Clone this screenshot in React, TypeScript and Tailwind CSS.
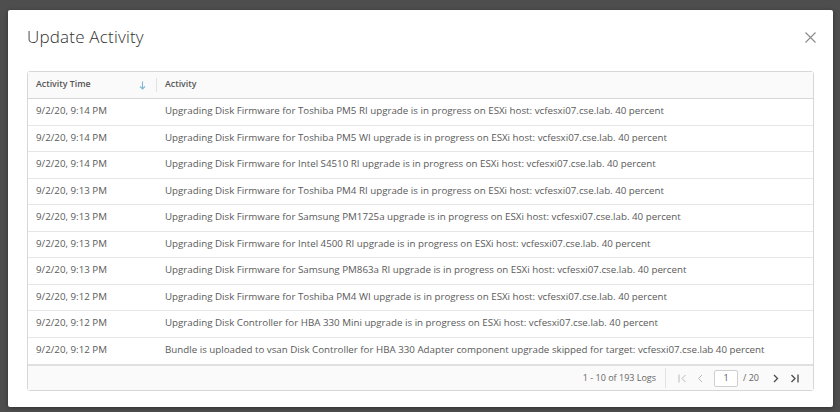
import React from 'react';

const rows: [string, string][] = [
  ['9/2/20, 9:14 PM', 'Upgrading Disk Firmware for Toshiba PM5 RI upgrade is in progress on ESXi host: vcfesxi07.cse.lab. 40 percent'],
  ['9/2/20, 9:14 PM', 'Upgrading Disk Firmware for Toshiba PM5 WI upgrade is in progress on ESXi host: vcfesxi07.cse.lab. 40 percent'],
  ['9/2/20, 9:14 PM', 'Upgrading Disk Firmware for Intel S4510 RI upgrade is in progress on ESXi host: vcfesxi07.cse.lab. 40 percent'],
  ['9/2/20, 9:13 PM', 'Upgrading Disk Firmware for Toshiba PM4 RI upgrade is in progress on ESXi host: vcfesxi07.cse.lab. 40 percent'],
  ['9/2/20, 9:13 PM', 'Upgrading Disk Firmware for Samsung PM1725a upgrade is in progress on ESXi host: vcfesxi07.cse.lab. 40 percent'],
  ['9/2/20, 9:13 PM', 'Upgrading Disk Firmware for Intel 4500 RI upgrade is in progress on ESXi host: vcfesxi07.cse.lab. 40 percent'],
  ['9/2/20, 9:13 PM', 'Upgrading Disk Firmware for Samsung PM863a RI upgrade is in progress on ESXi host: vcfesxi07.cse.lab. 40 percent'],
  ['9/2/20, 9:12 PM', 'Upgrading Disk Firmware for Toshiba PM4 WI upgrade is in progress on ESXi host: vcfesxi07.cse.lab. 40 percent'],
  ['9/2/20, 9:12 PM', 'Upgrading Disk Controller for HBA 330 Mini upgrade is in progress on ESXi host: vcfesxi07.cse.lab. 40 percent'],
  ['9/2/20, 9:12 PM', 'Bundle is uploaded to vsan Disk Controller for HBA 330 Adapter component upgrade skipped for target: vcfesxi07.cse.lab 40 percent'],
];

const font = { fontFamily: '"Open Sans", "Liberation Sans", sans-serif' };

export default function App() {
  return (
    <div className="w-[840px] h-[412px] bg-[#4e4e4e] pt-[10px] pl-[8px]" style={font}>
      <div className="w-[825px] h-[397px] bg-white rounded-[2px] shadow-[0_1px_4px_rgba(0,0,0,0.4)] px-[19px] flex flex-col">
        <div className="flex items-start justify-between pt-[14px] h-[61px]">
          <h1 className="text-[17px] font-light text-[#313131] leading-[26px] tracking-[0.2px]">Update Activity</h1>
          <button className="mt-[8px] mr-[-2px] text-[#8a8a8a]">
            <svg width="11" height="11" viewBox="0 0 11 11" fill="none" stroke="currentColor" strokeWidth="1.1">
              <path d="M0.5 0.5 L10.5 10.5 M10.5 0.5 L0.5 10.5" />
            </svg>
          </button>
        </div>

        <div className="w-[787px] border border-[#d7d7d7] rounded-[3px] text-[9.75px] text-[#5a5a5a]">
          <div className="flex items-center h-[27px] bg-[#fafafa] border-b border-[#d7d7d7] font-semibold text-[#555] text-[8.8px]">
            <div className="w-[128px] pl-[8px] flex items-center justify-between pr-[10px]">
              <span>Activity Time</span>
              <svg width="7" height="9" viewBox="0 0 7 9" fill="none" stroke="#7fb6d6" strokeWidth="1.1">
                <path d="M3.5 0.5 V8 M1 5.5 L3.5 8 L6 5.5" />
              </svg>
            </div>
            <div className="w-px h-[14px] bg-[#e2e2e2]" />
            <div className="pl-[8px]">Activity</div>
          </div>

          {rows.map(([t, a], i) => (
            <div key={i} className={`flex items-center h-[26.5px] ${i < rows.length - 1 ? 'border-b border-[#e6e6e6]' : ''}`}>
              <div className="w-[129px] pl-[8px] whitespace-nowrap">{t}</div>
              <div className="pl-[8px] whitespace-nowrap">{a}</div>
            </div>
          ))}

          <div className="flex items-center justify-end h-[26px] border-t-2 border-[#e0e0e0] bg-[#fafafa] text-[9px] pr-[14px]">
            <span className="text-[#666]">1 - 10 of 193 Logs</span>
            <div className="w-px h-[20px] bg-[#e2e2e2] ml-[9px] mr-[12px]" />
            <svg width="9" height="9" viewBox="0 0 9 9" fill="none" stroke="#b9b9b9" strokeWidth="1">
              <path d="M1 0.5 V8.5 M7.5 1 L4 4.5 L7.5 8" />
            </svg>
            <svg className="ml-[10px]" width="7" height="9" viewBox="0 0 7 9" fill="none" stroke="#b9b9b9" strokeWidth="1">
              <path d="M5 1 L1.5 4.5 L5 8" />
            </svg>
            <div className="ml-[10px] w-[24px] h-[17px] border border-[#cfcfcf] rounded-[2px] bg-white flex items-center justify-center text-[#565656]">1</div>
            <span className="ml-[5px] text-[#666]">/ 20</span>
            <svg className="ml-[13px]" width="7" height="9" viewBox="0 0 7 9" fill="none" stroke="#4a4a4a" strokeWidth="1.3">
              <path d="M2 1 L5.5 4.5 L2 8" />
            </svg>
            <svg className="ml-[11px]" width="9" height="9" viewBox="0 0 9 9" fill="none" stroke="#4a4a4a" strokeWidth="1.3">
              <path d="M1.5 1 L5 4.5 L1.5 8 M8 0.5 V8.5" />
            </svg>
          </div>
        </div>
      </div>
    </div>
  );
}
